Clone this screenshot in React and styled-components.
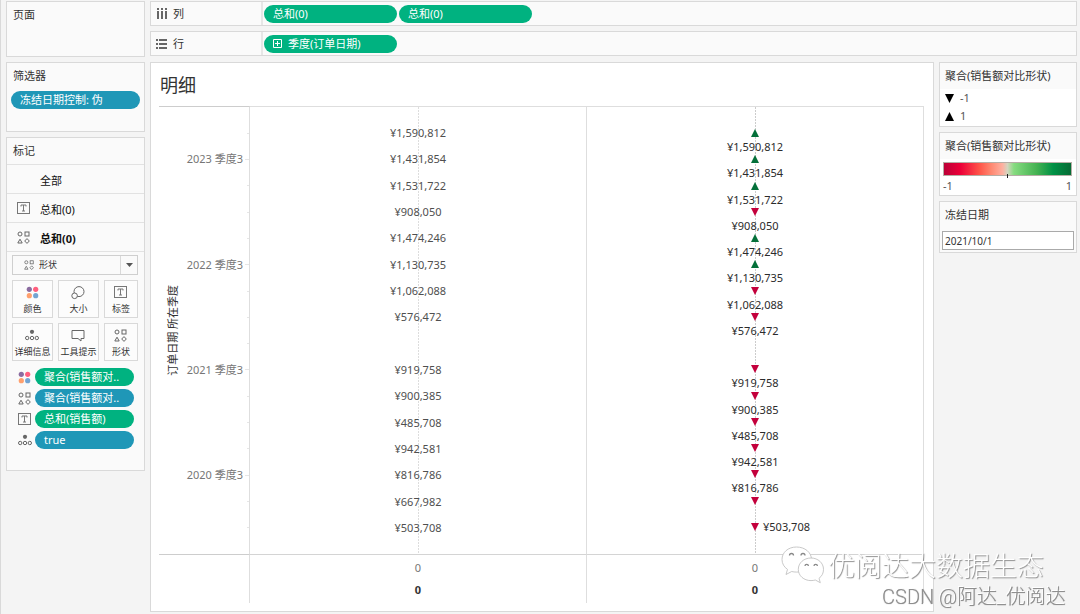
import React from "react";
import styled, { createGlobalStyle, css } from "styled-components";

const GREEN = "#00b280";
const BLUE = "#1f97b7";
const LINE = "#d9d9d9";
const UP = "#04703a";
const DOWN = "#c3003c";

const GlobalStyle = createGlobalStyle`
  *, *::before, *::after { box-sizing: border-box; }
  body {
    margin: 0;
    background: #f4f4f4;
    color: #333;
    font-family: "Noto Sans", "Noto Sans CJK SC", sans-serif;
    font-size: 11px;
    line-height: 16px;
  }
  button, input, select { font: inherit; color: inherit; margin: 0; }
  ul, h1, h2, p { margin: 0; padding: 0; list-style: none; font-weight: 400; }
`;

const Page = styled.div`
  display: flex;
  gap: 5px;
  min-height: 100vh;
  padding: 1px 3px 2px 5px;
  border-left: 1px solid ${LINE};
`;

const Sidebar = styled.aside`
  flex: 0 0 139px;
  display: flex;
  flex-direction: column;
  gap: 5px;
`;

const Workspace = styled.div`
  flex: 1;
  min-width: 0;
  display: flex;
  flex-direction: column;
`;

const Card = styled.section`
  min-height: ${(p) => p.$min || 0}px;
  border: 1px solid ${LINE};
  background: #fafafa;
`;

const CardTitle = styled.h2`
  padding: 5px 6px;
  font-size: 11px;
  line-height: 16px;
`;

const Pill = styled.button`
  display: flex;
  align-items: center;
  gap: 6px;
  width: ${(p) => p.$width || "100%"};
  height: 18px;
  padding: 0 9px;
  border: 0;
  border-radius: 9px;
  background: ${(p) => (p.$blue ? BLUE : GREEN)};
  color: #fff;
  line-height: 16px;
  text-align: left;
  white-space: nowrap;
`;

const FilterBody = styled.div`
  padding: 2px 4px;
`;

/* Marks card */
const MarksTitle = styled(CardTitle)`
  height: 27px;
  border-bottom: 1px solid #e2e2e2;
`;

const Layer = styled.button`
  display: grid;
  grid-template-columns: 14px 1fr;
  gap: 9px;
  align-items: center;
  width: 100%;
  height: 29px;
  padding: 0 10px;
  border: 0;
  border-bottom: 1px solid #e2e2e2;
  background: transparent;
  color: #111;
  font-weight: ${(p) => (p.$active ? 700 : 400)};
  text-align: left;
`;

const LayerName = styled.span`
  padding-top: 4px;
`;

const MarksBody = styled.div`
  display: flex;
  flex-direction: column;
  gap: 5px;
  padding: 3px 6px 5px 5px;
`;

const TypeSelect = styled.label`
  display: grid;
  grid-template-columns: 26px 1fr 16px;
  align-items: center;
  height: 20px;
  border: 1px solid #cfcfcf;
  background: #fafafa;
  svg { justify-self: center; }
  svg:first-child { margin-left: 6px; }
`;

const Select = styled.select`
  appearance: none;
  align-self: stretch;
  padding: 0;
  border: 0;
  border-right: 1px solid ${LINE};
  background: transparent;
  font-size: 9px;
  outline: none;
`;

const MarkGrid = styled.div`
  display: grid;
  grid-template-columns: 6fr 6fr 5fr;
  gap: 5px;
`;

const MarkButton = styled.button`
  display: flex;
  flex-direction: column;
  align-items: center;
  justify-content: space-between;
  min-width: 0;
  height: 38px;
  padding: 5px 0 1px;
  border: 1px solid ${LINE};
  background: #fcfcfc;
  font-size: 9px;
  line-height: 14px;
  white-space: nowrap;
`;

const MarkPills = styled.ul`
  display: flex;
  flex-direction: column;
  gap: 3px;
  padding: 2px 4px 0 6px;
`;

const MarkPillRow = styled.li`
  display: grid;
  grid-template-columns: 14px 1fr;
  gap: 3px;
  align-items: center;
`;

/* Shelves */
const Shelves = styled.div`
  display: flex;
  flex-direction: column;
  gap: 5px;
  margin-bottom: 6px;
`;

const Shelf = styled.section`
  display: flex;
  height: 25px;
  border: 1px solid ${LINE};
  background: #fafafa;
`;

const ShelfName = styled.h2`
  flex: 0 0 112px;
  display: flex;
  align-items: center;
  gap: 6px;
  padding-left: 5px;
  border-right: 2px solid #e6e6e6;
  font-size: 11px;
`;

const ShelfPills = styled.div`
  display: flex;
  align-items: center;
  gap: 2px;
  padding-left: 1px;
`;

/* View */
const Content = styled.div`
  flex: 1;
  display: flex;
  gap: 5px;
`;

const Sheet = styled.main`
  flex: 1;
  min-width: 0;
  display: flex;
  flex-direction: column;
  padding: 0 9px 8px 8px;
  border: 1px solid ${LINE};
  background: #fff;
`;

const SheetTitle = styled.h1`
  padding: 10px 1px 9px;
  font-size: 18px;
  line-height: 24px;
`;

const Chart = styled.div`
  flex: 1;
  display: grid;
  grid-template-columns: 91px minmax(0, 1fr) minmax(0, 1fr);
  grid-template-rows: 1fr 48px;
`;

const RowHeader = styled.div`
  display: flex;
  align-items: stretch;
  border-top: 1px solid #cdcdcd;
  border-right: 1px solid #dedede;
  border-bottom: 1px solid #cdcdcd;
`;

const FieldLabel = styled.p`
  align-self: center;
  flex: 0 0 16px;
  margin-left: 6px;
  writing-mode: vertical-rl;
  text-orientation: sideways;
  transform: rotate(180deg);
`;

const Rows = styled.ul`
  flex: 1;
  display: flex;
  flex-direction: column;
  padding: ${(p) => (p.$below ? "21px 0 6px" : "13px 0")};
`;

const rowBase = css`
  flex: 1 1 0;
  min-height: 16px;
`;

const Quarter = styled.li`
  ${rowBase}
  display: flex;
  align-items: center;
  justify-content: flex-end;
  gap: 2px;
  color: #767676;
  white-space: nowrap;
  &::after {
    content: "";
    width: ${(p) => (p.$major ? 4 : 2)}px;
    height: 1px;
    background: #e6e6e6;
  }
`;

const Pane = styled.div`
  display: flex;
  border: solid #dedede;
  border-width: 1px 1px 1px 0;
  border-bottom-color: #d4d4d4;
  background: repeating-linear-gradient(${(p) => p.$line} 0 2px, transparent 2px 3px) center top / 1px 100% no-repeat;
`;

const Value = styled.li`
  ${rowBase}
  display: flex;
  align-items: center;
  justify-content: center;
  color: #4f4f4f;
`;

const ShapeValue = styled.li`
  ${rowBase}
  display: grid;
  grid-template-columns: 1fr 10px 1fr;
  align-content: start;
  align-items: center;
  justify-items: center;
  color: #2b2b2b;
  svg { grid-column: 2; margin: 1px 0; }
`;

const ShapeLabel = styled.span`
  grid-column: ${(p) => (p.$side ? "3" : "1 / -1")};
  justify-self: ${(p) => (p.$side ? "start" : "center")};
  padding-left: ${(p) => (p.$side ? 3 : 0)}px;
  line-height: ${(p) => (p.$side ? 10 : 17)}px;
`;

const Axis = styled.div`
  display: flex;
  flex-direction: column;
  align-items: center;
  padding-top: 5px;
  border-right: 1px solid #dedede;
  color: #767676;
`;

const AxisTitle = styled.strong`
  margin-top: 6px;
  color: #333;
`;

/* Legends */
const Legends = styled.aside`
  flex: 0 0 138px;
  display: flex;
  flex-direction: column;
  gap: 5px;
`;

const LegendTitle = styled(CardTitle)`
  display: block;
  height: 26px;
  padding-left: 5px;
`;

const LegendBody = styled.div`
  background: #fff;
  color: #555;
  padding: ${(p) => p.$pad || "0 5px 1px"};
`;

const LegendItem = styled.li`
  display: flex;
  align-items: center;
  gap: 6px;
  height: 18px;
`;

const Ramp = styled.div`
  display: flex;
  justify-content: center;
  height: 14px;
  border: 1px solid #b5ada5;
  background: linear-gradient(90deg, #bb0037 0, #ec0038 13%, #ff5549 28%, #ff8770 37%, #ffb0a0 46%, #d5d5c0 50%, #86dc80 55%, #45b252 73%, #009145 86%, #066b35 100%);
  &::after {
    content: "";
    width: 1px;
    height: 4px;
    margin-top: 11px;
    background: #222;
  }
`;

const RampEnds = styled.div`
  display: flex;
  justify-content: space-between;
  padding-top: 2px;
`;

const DateInput = styled.input`
  display: block;
  width: calc(100% - 4px);
  height: 19px;
  margin: 3px 2px 2px;
  padding: 0 2px;
  border: 1px solid #aaa;
  border-radius: 0;
  background: #fff;
  font-size: 10px;
  outline: none;
`;

/* Watermark */
const Watermark = styled.div`
  position: fixed;
  right: 14px;
  bottom: 4px;
  display: flex;
  flex-direction: column;
  align-items: flex-end;
  font-family: "Noto Sans CJK SC", sans-serif;
  pointer-events: none;
  white-space: nowrap;
`;

const Account = styled.div`
  display: flex;
  align-items: center;
  gap: 4px;
  margin-right: 22px;
  color: #fff;
  font-size: 27px;
  font-weight: 300;
  line-height: 36px;
  text-shadow: 1px 1px 1px #8d8d8d;
`;

const Credit = styled.div`
  color: #8f8f8f;
  font-family: Roboto, "Noto Sans CJK SC", sans-serif;
  font-size: 20px;
  font-weight: 300;
  line-height: 26px;
  text-shadow: -1px -1px 0 #fff, 0 0 1px #8f8f8f;
`;

const ShapesIcon = ({ size = 13 }) => (
  <svg width={size} height={size} viewBox="0 0 13 13" fill="none" stroke="#666" aria-hidden="true">
    <circle cx="3" cy="3" r="2" />
    <rect x="8" y="1" width="4" height="4" />
    <path d="M3 8.2 L5.2 12 H0.8 Z" />
    <path d="M10 7.6 L12.3 10 L10 12.4 L7.7 10 Z" />
  </svg>
);

const TextIcon = () => (
  <svg width="14" height="12" viewBox="0 0 14 12" fill="none" stroke="#777" aria-hidden="true">
    <rect x="0.5" y="0.5" width="12" height="11" />
    <path d="M4 4.5 V3 H9 V4.5 M6.5 3 V9 M5 9 H8" />
  </svg>
);

const ColorIcon = () => (
  <svg width="13" height="13" viewBox="0 0 13 13" aria-hidden="true">
    <circle cx="3.3" cy="3.3" r="2.6" fill="#8b6ca0" />
    <circle cx="9.7" cy="3.3" r="2.6" fill="#ff5f7e" />
    <circle cx="3.3" cy="9.7" r="2.6" fill="#ffa06e" />
    <circle cx="9.7" cy="9.7" r="2.6" fill="#73a4d2" />
  </svg>
);

const SizeIcon = () => (
  <svg width="14" height="14" viewBox="0 0 14 14" stroke="#666" fill="none" aria-hidden="true">
    <circle cx="8" cy="5.6" r="5" />
    <circle cx="3.6" cy="9.8" r="2.8" fill="#fcfcfc" />
  </svg>
);

const DetailIcon = () => (
  <svg width="14" height="12" viewBox="0 0 14 12" fill="none" stroke="#666" aria-hidden="true">
    <circle cx="7" cy="2.8" r="2.1" fill="#666" stroke="none" />
    <circle cx="2.2" cy="9" r="1.7" />
    <circle cx="7" cy="9" r="1.7" />
    <circle cx="11.8" cy="9" r="1.7" />
  </svg>
);

const TooltipIcon = () => (
  <svg width="14" height="13" viewBox="0 0 14 13" fill="none" stroke="#666" aria-hidden="true">
    <path d="M1 1.5 H13 V9.5 H10 V12 L7 9.5 H1 Z" />
  </svg>
);

const ColumnsIcon = () => (
  <svg width="11" height="12" viewBox="0 0 11 12" fill="#666" aria-hidden="true">
    <path d="M1 0h2v2H1zM5 0h2v2H5zM9 0h2v2H9zM1 3h2v8H1zM5 3h2v8H5zM9 3h2v8H9z" />
  </svg>
);

const RowsIcon = () => (
  <svg width="11" height="10" viewBox="0 0 11 10" fill="#666" aria-hidden="true">
    <path d="M0 0h2v2H0zM0 4h2v2H0zM0 8h2v2H0zM3 0h8v2H3zM3 4h8v2H3zM3 8h8v2H3z" />
  </svg>
);

const ExpandIcon = () => (
  <svg width="9" height="9" viewBox="0 0 9 9" fill="none" stroke="#fff" aria-hidden="true">
    <path d="M0.5 0.5h8v8h-8zM2 4.5h5M4.5 2v5" />
  </svg>
);

const CaretIcon = () => (
  <svg width="7" height="4" viewBox="0 0 7 4" fill="#555" aria-hidden="true">
    <path d="M0 0H7L3.5 4Z" />
  </svg>
);

const Triangle = ({ up, color, size = 8 }) => (
  <svg width={size} height={size} viewBox="0 0 8 8" fill={color} aria-hidden="true">
    <path d={up ? "M4 0 L8 8 H0 Z" : "M0 0 H8 L4 8 Z"} />
  </svg>
);

const ChatLogo = () => (
  <svg width="43" height="38" viewBox="0 0 43 38" aria-hidden="true">
    <g fill="#fff" stroke="#bbb" strokeWidth="0.8">
      <path d="M15.500 1 C7 1 1 6.500 1 13.500 C1 17.600 3.100 21.100 6.500 23.400 L5 28.500 L10.700 25.500 C12.200 25.900 13.800 26.100 15.500 26.100 C24 26.100 30.500 20.500 30.500 13.500 C30.500 6.500 24 1 15.500 1 Z" />
      <path d="M30 12 C22.800 12 17.300 17 17.300 23.300 C17.300 29.700 22.800 34.600 30 34.600 C31.600 34.600 33 34.400 34.300 34 L39.300 36.700 L38 32.300 C41 30.200 42.500 27 42.500 23.300 C42.500 17 37 12 30 12 Z" />
    </g>
    <g fill="none" stroke="#888" strokeWidth="1.300">
      <path d="M8.500 9.500 a2 2 0 0 1 4 0 M20 9.500 a2 2 0 0 1 4 0 M24 20 a1.700 1.700 0 0 1 3.400 0 M33 20 a1.700 1.700 0 0 1 3.400 0" />
    </g>
  </svg>
);

const quarters = [
  { value: "¥1,590,812", up: true },
  { value: "¥1,431,854", up: true, label: "2023 季度3" },
  { value: "¥1,531,722", up: true },
  { value: "¥908,050" },
  { value: "¥1,474,246", up: true },
  { value: "¥1,130,735", up: true, label: "2022 季度3" },
  { value: "¥1,062,088" },
  { value: "¥576,472" },
  {},
  { value: "¥919,758", label: "2021 季度3" },
  { value: "¥900,385" },
  { value: "¥485,708" },
  { value: "¥942,581" },
  { value: "¥816,786", label: "2020 季度3" },
  { value: "¥667,982", hideLabel: true },
  { value: "¥503,708", side: true },
];

const markButtons = [
  ["颜色", ColorIcon],
  ["大小", SizeIcon],
  ["标签", TextIcon],
  ["详细信息", DetailIcon],
  ["工具提示", TooltipIcon],
  ["形状", ShapesIcon],
];

const markPills = [
  ["聚合(销售额对..", ColorIcon, false],
  ["聚合(销售额对..", ShapesIcon, true],
  ["总和(销售额)", TextIcon, false],
  ["true", DetailIcon, true],
];

export default function App() {
  return (
    <>
      <GlobalStyle />
      <Page>
        <Sidebar>
          <Card $min={56}>
            <CardTitle>页面</CardTitle>
          </Card>
          <Card $min={70}>
            <CardTitle>筛选器</CardTitle>
            <FilterBody>
              <Pill $blue>冻结日期控制: 伪</Pill>
            </FilterBody>
          </Card>
          <Card $min={334}>
            <MarksTitle>标记</MarksTitle>
            <Layer>
              <span />
              <LayerName>全部</LayerName>
            </Layer>
            <Layer>
              <TextIcon />
              <LayerName>总和(0)</LayerName>
            </Layer>
            <Layer $active>
              <ShapesIcon />
              <LayerName>总和(0)</LayerName>
            </Layer>
            <MarksBody>
              <TypeSelect>
                <ShapesIcon size={10} />
                <Select aria-label="标记类型" defaultValue="形状">
                  <option>形状</option>
                </Select>
                <CaretIcon />
              </TypeSelect>
              <MarkGrid>
                {markButtons.map(([name, Icon]) => (
                  <MarkButton key={name}>
                    <Icon />
                    <span>{name}</span>
                  </MarkButton>
                ))}
              </MarkGrid>
              <MarkPills>
                {markPills.map(([name, Icon, blue], i) => (
                  <MarkPillRow key={i}>
                    <Icon />
                    <Pill $blue={blue}>{name}</Pill>
                  </MarkPillRow>
                ))}
              </MarkPills>
            </MarksBody>
          </Card>
        </Sidebar>

        <Workspace>
          <Shelves>
            <Shelf>
              <ShelfName>
                <ColumnsIcon />列
              </ShelfName>
              <ShelfPills>
                <Pill $width="133px">总和(0)</Pill>
                <Pill $width="133px">总和(0)</Pill>
              </ShelfPills>
            </Shelf>
            <Shelf>
              <ShelfName>
                <RowsIcon />行
              </ShelfName>
              <ShelfPills>
                <Pill $width="133px">
                  <ExpandIcon />
                  季度(订单日期)
                </Pill>
              </ShelfPills>
            </Shelf>
          </Shelves>

          <Content>
            <Sheet>
              <SheetTitle>明细</SheetTitle>
              <Chart>
                <RowHeader>
                  <FieldLabel>订单日期 所在季度</FieldLabel>
                  <Rows>
                    {quarters.map((q, i) => (
                      <Quarter key={i} $major={!!q.label}>
                        {q.label}
                      </Quarter>
                    ))}
                  </Rows>
                </RowHeader>
                <Pane $line="#dddddd">
                  <Rows>
                    {quarters.map((q, i) => (
                      <Value key={i}>{q.value}</Value>
                    ))}
                  </Rows>
                </Pane>
                <Pane $line="#cccccc">
                  <Rows $below>
                    {quarters.map((q, i) => (
                      <ShapeValue key={i}>
                        {q.value && <Triangle up={q.up} color={q.up ? UP : DOWN} />}
                        {q.value && !q.hideLabel && <ShapeLabel $side={q.side}>{q.value}</ShapeLabel>}
                      </ShapeValue>
                    ))}
                  </Rows>
                </Pane>
                <Axis />
                <Axis>
                  <span>0</span>
                  <AxisTitle>0</AxisTitle>
                </Axis>
                <Axis>
                  <span>0</span>
                  <AxisTitle>0</AxisTitle>
                </Axis>
              </Chart>
            </Sheet>

            <Legends>
              <Card>
                <LegendTitle>聚合(销售额对比形状)</LegendTitle>
                <LegendBody as="ul">
                  <LegendItem>
                    <Triangle color="#000" size={9} />
                    -1
                  </LegendItem>
                  <LegendItem>
                    <Triangle up color="#000" size={9} />1
                  </LegendItem>
                </LegendBody>
              </Card>
              <Card>
                <LegendTitle>聚合(销售额对比形状)</LegendTitle>
                <LegendBody $pad="3px 4px 1px 3px">
                  <Ramp />
                  <RampEnds>
                    <span>-1</span>
                    <span>1</span>
                  </RampEnds>
                </LegendBody>
              </Card>
              <Card>
                <LegendTitle as="label" htmlFor="freeze-date">
                  冻结日期
                </LegendTitle>
                <DateInput id="freeze-date" type="text" defaultValue="2021/10/1" />
              </Card>
            </Legends>
          </Content>
        </Workspace>
      </Page>

      <Watermark>
        <Account>
          <ChatLogo />
          优阅达大数据生态
        </Account>
        <Credit>CSDN @阿达_优阅达</Credit>
      </Watermark>
    </>
  );
}
